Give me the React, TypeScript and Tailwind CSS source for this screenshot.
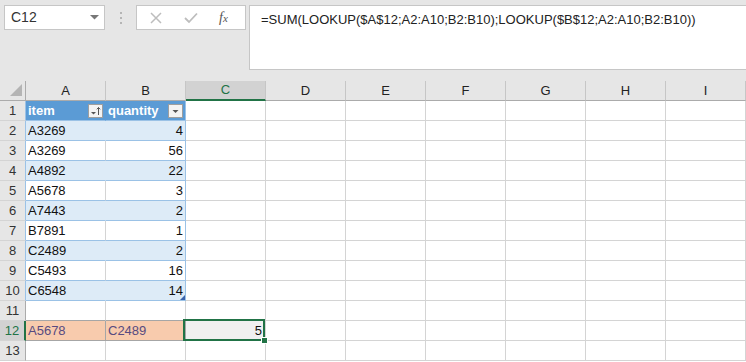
import React from "react";

type Row = { n: number; a?: string; b?: string; c?: string };

const rows: Row[] = [
  { n: 1, a: "item", b: "quantity" },
  { n: 2, a: "A3269", b: "4" },
  { n: 3, a: "A3269", b: "56" },
  { n: 4, a: "A4892", b: "22" },
  { n: 5, a: "A5678", b: "3" },
  { n: 6, a: "A7443", b: "2" },
  { n: 7, a: "B7891", b: "1" },
  { n: 8, a: "C2489", b: "2" },
  { n: 9, a: "C5493", b: "16" },
  { n: 10, a: "C6548", b: "14" },
  { n: 11 },
  { n: 12, a: "A5678", b: "C2489", c: "5" },
  { n: 13 },
];

const columns = ["A", "B", "C", "D", "E", "F", "G", "H", "I"];

const rowHeadClass = (n: number) => {
  if (n === 12) return "bg-[#d2d2d2] text-[#217346] border-r-2 border-b border-r-[#217346] border-b-[#d4d4d4]";
  if (n <= 10) return "bg-[#e6e6e6] text-[#333] border-r border-b border-r-[#9bc2e6] border-b-[#d4d4d4]";
  return "bg-[#e6e6e6] text-[#333] border-r border-b border-r-[#ababab] border-b-[#d4d4d4]";
};

const aClass = (n: number) => {
  if (n === 1) return "bg-[#5b9bd5] text-white font-bold border-r border-b border-r-[#5b9bd5] border-b-[#9bc2e6]";
  if (n <= 10 && n % 2 === 0) return "bg-[#ddebf7] border-r border-b border-r-[#ddebf7] border-b-[#9bc2e6]";
  if (n <= 10) return "bg-white border-r border-b border-r-[#d4d4d4] border-b-[#9bc2e6]";
  if (n === 11) return "bg-white border-r border-b border-r-[#d4d4d4] border-b-[#a6a6a6]";
  if (n === 12) return "bg-[#f8cbad] text-[#574a80] border-r border-b border-r-[#a6a6a6] border-b-[#a6a6a6]";
  return "bg-white border-r border-b border-[#d4d4d4]";
};

const bClass = (n: number) => {
  if (n === 1) return "bg-[#5b9bd5] text-white font-bold border-r border-b border-r-[#9bc2e6] border-b-[#9bc2e6]";
  if (n <= 10 && n % 2 === 0) return "bg-[#ddebf7] border-r border-b border-[#9bc2e6]";
  if (n <= 10) return "bg-white border-r border-b border-[#9bc2e6]";
  if (n === 11) return "bg-white border-r border-b border-r-[#d4d4d4] border-b-[#a6a6a6]";
  if (n === 12) return "bg-[#f8cbad] text-[#574a80] border-r border-b border-r-[#a6a6a6] border-b-[#a6a6a6]";
  return "bg-white border-r border-b border-[#d4d4d4]";
};

const FilterButton = ({ sorted }: { sorted?: boolean }) => (
  <div className="w-[15px] h-[14px] bg-[#f3f3f3] border border-[#9e9e9e] flex items-center justify-center">
    {sorted ? (
      <svg width="13" height="12" viewBox="0 0 13 12">
        <polygon points="2,7 7,7 4.5,9.5" fill="#555" />
        <path d="M9.5 2.5 L9.5 10 M7.8 4.3 L9.5 2.5 L11.2 4.3" stroke="#555" strokeWidth="1" fill="none" />
      </svg>
    ) : (
      <svg width="13" height="12" viewBox="0 0 13 12">
        <polygon points="3.5,5 9.5,5 6.5,8" fill="#555" />
      </svg>
    )}
  </div>
);

const App = () => {
  return (
    <div
      className="w-[746px] h-[362px] overflow-hidden bg-white text-[13px] text-[#111]"
      style={{ fontFamily: '"Liberation Sans", Arial, sans-serif' }}
    >
      {/* name box + formula bar */}
      <div className="h-[81px] bg-[#e6e6e6] flex items-start pt-[5px]">
        <div className="ml-[4px] w-[101px] h-[25px] bg-white border border-[#c6c6c6] flex items-center justify-between pl-[6px] pr-[5px]">
          <span className="text-[14px] text-[#333]">C12</span>
          <svg width="9" height="5" viewBox="0 0 9 5">
            <polygon points="0,0 9,0 4.5,4.5" fill="#777" />
          </svg>
        </div>
        <div className="w-[31px] h-[25px] flex flex-col items-center justify-center gap-[3px]">
          <div className="w-[2px] h-[2px] bg-[#b5b5b5]" />
          <div className="w-[2px] h-[2px] bg-[#b5b5b5]" />
          <div className="w-[2px] h-[2px] bg-[#b5b5b5]" />
        </div>
        <div className="w-[110px] h-[25px] bg-white border border-[#c6c6c6] flex items-center pl-[13px]">
          <svg width="12" height="12" viewBox="0 0 12 12">
            <path d="M1 1 L11 11 M11 1 L1 11" stroke="#bdbdbd" strokeWidth="1.5" />
          </svg>
          <svg className="ml-[22px]" width="14" height="12" viewBox="0 0 14 12">
            <path d="M1 6 L5 10 L13 1.5" stroke="#bdbdbd" strokeWidth="1.8" fill="none" />
          </svg>
          <span
            className="ml-[21px] italic text-[14px] text-[#555]"
            style={{ fontFamily: '"Liberation Serif", serif' }}
          >
            f<span className="text-[11px]">x</span>
          </span>
        </div>
        <div className="ml-[3px] flex-1 h-[65px] bg-white border border-r-0 border-[#c6c6c6] pl-[11px] pt-[4px] text-[13px] text-[#222]">
          =SUM(LOOKUP($A$12;A2:A10;B2:B10);LOOKUP($B$12;A2:A10;B2:B10))
        </div>
      </div>

      {/* sheet grid */}
      <div className="grid grid-cols-[26px_repeat(9,80px)] auto-rows-[20px]">
        <div className="bg-[#e6e6e6] border-r border-b border-[#ababab] flex items-start">
          <svg width="25" height="19" viewBox="0 0 25 19">
            <polygon points="22,3 22,15 10,15" fill="#b4b4b4" />
          </svg>
        </div>
        {columns.map((c) =>
          c === "C" ? (
            <div
              key={c}
              className="bg-[#d2d2d2] text-[#217346] border-r border-b-2 border-r-[#c6c6c6] border-b-[#217346] flex items-center justify-center"
            >
              {c}
            </div>
          ) : (
            <div
              key={c}
              className="bg-[#e6e6e6] text-[#222] border-r border-b border-r-[#c6c6c6] border-b-[#ababab] flex items-center justify-center"
            >
              {c}
            </div>
          )
        )}

        {rows.map((r) => (
          <React.Fragment key={r.n}>
            <div className={`flex items-center justify-center ${rowHeadClass(r.n)}`}>{r.n}</div>
            <div className={`flex items-center justify-between pl-[2px] pr-[2px] ${aClass(r.n)}`}>
              <span>{r.a}</span>
              {r.n === 1 && <FilterButton sorted />}
            </div>
            <div
              className={`relative flex items-center pl-[2px] pr-[2px] ${r.n === 1 || r.n === 12 ? "justify-between" : "justify-end"} ${bClass(r.n)}`}
            >
              <span>{r.b}</span>
              {r.n === 1 && <FilterButton />}
              {r.n === 10 && (
                <svg className="absolute right-0 bottom-0" width="5" height="5" viewBox="0 0 5 5">
                  <polygon points="5,0 5,5 0,5" fill="#3b64ad" />
                </svg>
              )}
            </div>
            {r.n === 12 ? (
              <div className="relative bg-[#f0f0f0] border-r border-b border-[#d4d4d4] flex items-center justify-end pr-[3px]">
                <span>{r.c}</span>
                <div className="absolute -left-[3px] -top-[2px] right-0 -bottom-[1px] border-2 border-[#217346]" />
                <div className="absolute -right-[3px] -bottom-[4px] w-[7px] h-[7px] bg-[#217346] border border-white" />
              </div>
            ) : (
              <div className="bg-white border-r border-b border-[#d4d4d4]" />
            )}
            {columns.slice(3).map((c) => (
              <div key={c} className="bg-white border-r border-b border-[#d4d4d4]" />
            ))}
          </React.Fragment>
        ))}
      </div>
    </div>
  );
};

export default App;
